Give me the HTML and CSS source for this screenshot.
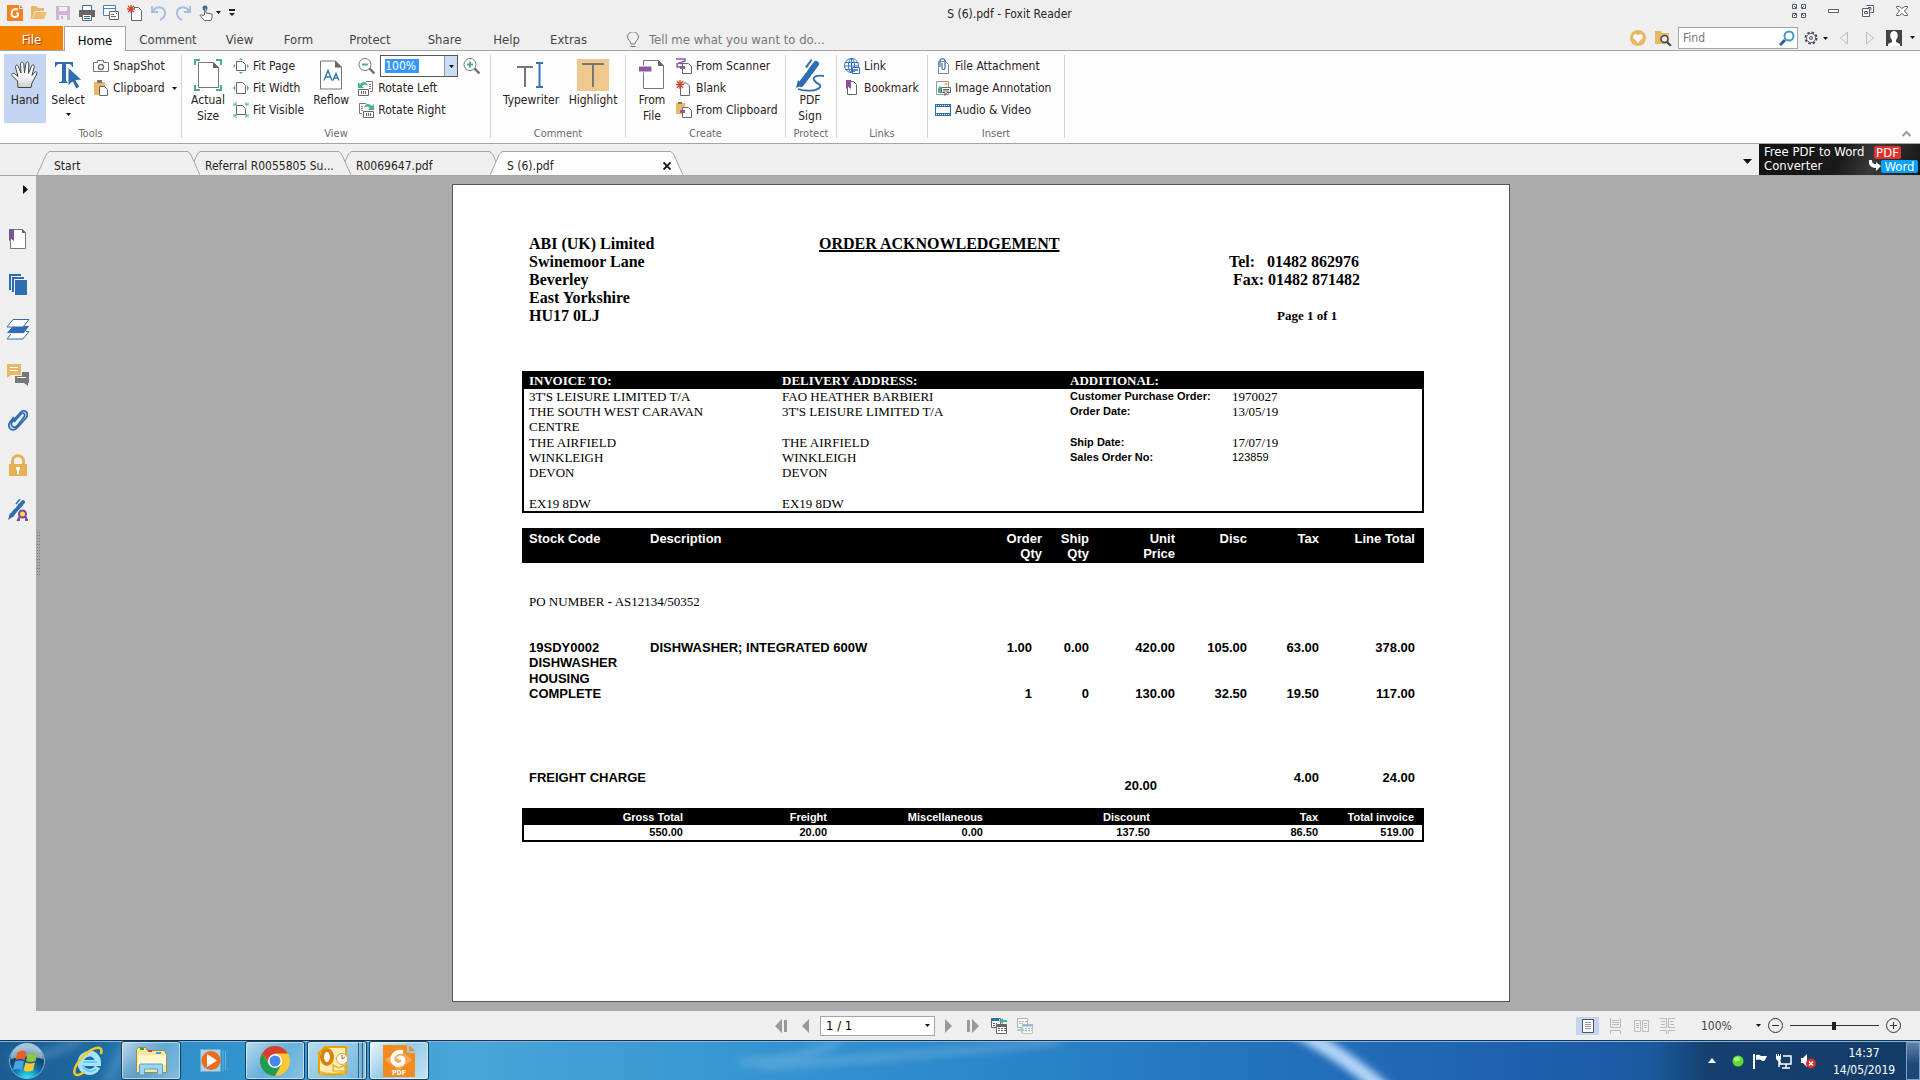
FILE: index.html
```html
<!DOCTYPE html>
<html lang="en">
<head>
<meta charset="utf-8">
<title>S (6).pdf - Foxit Reader</title>
<link rel="stylesheet" href="styles.css">
</head>
<body>
<header class="titlebar">
  <div class="quick">
    <svg width="16" height="16" viewBox="0 0 16 16"><path fill="#f58220" d="M0 0h12v4h4v12H0z"/><path fill="#f58220" d="M13 0l3 3h-3z"/><path fill="none" stroke="#fff" stroke-width="2" d="M11 4.500C7 3 4 6 4.500 9s4 4 6 2c1-1 1-3-1-3"/></svg>
    <button aria-label="Open"><svg width="16" height="16" viewBox="0 0 16 16"><path fill="#e9b765" d="M0 1h5l2 2h6v3H4L1 14H0z"/><path fill="#edbd6c" d="M4.500 7H16l-3 7H1.500z"/></svg></button>
    <button aria-label="Save"><svg width="16" height="16" viewBox="0 0 16 16"><path fill="#cdb5d8" d="M1 1h14v14H1z"/><path fill="#efefef" d="M4 2h8v4H4zM4 10h8v5H4z"/><path fill="#cdb5d8" d="M6 11h2v3H6z"/></svg></button>
    <button aria-label="Print"><svg width="16" height="16" viewBox="0 0 16 16"><path fill="#fff" stroke="#2d6db0" d="M3.500.5h9v5h-9z"/><path fill="#666" d="M0 5h16v7h-3v-2H3v2H0z"/><path fill="#fff" stroke="#666" d="M3.500 9.500h9v6h-9z"/><path stroke="#2d6db0" d="M5 11.500h6M5 13.500h6"/></svg></button>
    <button aria-label="Email"><svg width="16" height="16" viewBox="0 0 16 16"><path fill="#fff" stroke="#4581bd" d="M.5.5h12v10H.5zM.5 3.500h12"/><path fill="#fff" stroke="#666" d="M6.500 6.500h9v8h-9z"/><path stroke="#666" d="M8 9.500h3M8 11.500h5M13 8.500h1"/></svg></button>
    <button aria-label="New"><svg width="16" height="16" viewBox="0 0 16 16"><path fill="#fff" stroke="#666" d="M4.500 4v11.500h10V5.500l-3-3H7"/><path stroke="#d04a32" stroke-width="1.300" d="M4 0v8M0 4h8M1 1l6 6M7 1L1 7"/></svg></button>
    <button aria-label="Undo"><svg width="16" height="16" viewBox="0 0 16 16"><path fill="none" stroke="#a5bfdc" stroke-width="2" d="M2 6c4-6 12-4 12 2 0 4-3 6-5 7M1 1v6h6"/></svg></button>
    <button aria-label="Redo"><svg width="16" height="16" viewBox="0 0 16 16"><path fill="none" stroke="#a5bfdc" stroke-width="2" d="M14 6C10 0 2 2 2 8c0 4 3 6 5 7M15 1v6H9"/></svg></button>
    <button aria-label="Touch mode"><svg width="22" height="16" viewBox="0 0 22 16"><circle cx="6" cy="3" r="2.500" fill="#2d6db0"/><path fill="#fff" stroke="#666" d="M5.500 10V3.500q.8-1 1.500 0V8l6 1v4l-1 2.500H5.500L1 10.500q1-1.500 3 0z"/><path fill="#111" d="M17 6h5l-2.500 3z"/></svg></button>
    <button aria-label="Customise"><svg width="6" height="8" viewBox="0 0 6 8"><path fill="#222" d="M0 0h6v2H0zM0 4h6L3 7z"/></svg></button>
  </div>
  <h1 class="wintitle">S (6).pdf - Foxit Reader</h1>
  <div class="winctl">
    <button aria-label="Full screen"><svg width="14" height="14" viewBox="0 0 14 14"><path fill="none" stroke="#555a6e" d="M.5.5h4v4h-4zM9.500.5h4v4h-4zM.5 9.500h4v4h-4zM9.500 9.500h4v4h-4zM2 2l2 2M12 2l-2 2M2 12l2-2M12 12l-2-2"/></svg></button>
    <button aria-label="Minimise"><svg width="12" height="14" viewBox="0 0 12 14"><path fill="#fff" stroke="#555a6e" d="M.5 5.500h10v3H.5z"/></svg></button>
    <button aria-label="Restore"><svg width="12" height="12" viewBox="0 0 12 12"><path fill="#fff" stroke="#555a6e" d="M4.500.5h7v7h-3M.5 3.500h7v8h-7zM2.500 6.500h3v2h-3zM6 2.500h3v3"/></svg></button>
    <button aria-label="Close"><svg width="12" height="12" viewBox="0 0 12 12"><path fill="#fff" stroke="#555a6e" d="M.5 1.500h3l2.500 2 2.500-2h3v1l-3 3.500 3 3.500v1h-3l-2.500-2-2.500 2h-3v-1l3-3.500-3-3.500z"/></svg></button>
  </div>
</header>

<nav class="menubar">
  <button class="m-file">File</button>
  <button class="m-home">Home</button>
  <button class="m m-lg">Comment</button>
  <button class="m m-sm">View</button>
  <button class="m m-sm">Form</button>
  <button class="m m-lg">Protect</button>
  <button class="m m-md">Share</button>
  <button class="m m-sm">Help</button>
  <button class="m m-md">Extras</button>
  <label class="tell"><svg width="12" height="16" viewBox="0 0 12 16"><path fill="none" stroke="#777" d="M4 12c0-3-3.500-4-3.500-7a5.200 5 0 0 1 11 0c0 3-3.500 4-3.500 7zM3.500 14.500h5"/></svg><input type="text" placeholder="Tell me what you want to do..."></label>
  <div class="menuright">
    <svg class="heart" width="16" height="16" viewBox="0 0 16 16"><circle cx="8" cy="8" r="8" fill="#e9b765"/><path fill="#fff" d="M8 13L3.500 8C2 5 6 2.500 8 5.500 10 2.500 14 5 12.500 8z"/></svg>
    <svg width="17" height="16" viewBox="0 0 17 16"><path fill="#e9b765" d="M0 1h6l1 2h7v11H0z"/><circle cx="9.500" cy="9" r="3.500" fill="#e8e8e8" stroke="#444" stroke-width="1.500"/><path stroke="#444" stroke-width="2" d="M12 12l4 4"/></svg>
    <label class="find"><input type="search" placeholder="Find" aria-label="Find"><svg width="16" height="16" viewBox="0 0 16 16"><path stroke="#2f6097" stroke-width="3" d="M1 15l5-5"/><circle cx="10" cy="6" r="4.500" fill="#fff" stroke="#3c9ccb" stroke-width="2"/></svg></label>
    <button aria-label="Settings"><svg width="24" height="14" viewBox="0 0 24 14"><circle cx="7" cy="7" r="5.500" fill="none" stroke="#444a5a" stroke-width="2" stroke-dasharray="2.500 1.800"/><circle cx="7" cy="7" r="4.500" fill="#f4f4f4" stroke="#667"/><circle cx="7" cy="7" r="1.500" fill="none" stroke="#444a5a"/><path fill="#111" d="M19 6h5l-2.500 3z"/></svg></button>
    <button class="hist" aria-label="Previous"><svg width="8" height="14" viewBox="0 0 8 14"><path fill="none" stroke="#bbb" d="M7.500 1v12L.5 7z"/></svg></button>
    <button class="hist" aria-label="Next"><svg width="8" height="14" viewBox="0 0 8 14"><path fill="none" stroke="#bbb" d="M.5 1v12l7-6z"/></svg></button>
    <button aria-label="Account"><svg width="30" height="16" viewBox="0 0 30 16"><path fill="#444" d="M0 0h16v16H0z"/><path fill="#fff" d="M2 16v-2l4-2v-2C3 7 4 1 8 1s5 6 2 9v2l4 2v2z"/><path fill="#111" d="M24 6h5l-2.500 3z"/></svg></button>
  </div>
</nav>

<section class="ribbon">
  <div class="group g-tools">
    <div class="gbody">
      <button class="big hand on"><svg width="28" height="28" viewBox="0 0 28 28"><defs><linearGradient id="hg" x1="0" y1="0" x2="0" y2="1"><stop offset=".5" stop-color="#fff"/><stop offset="1" stop-color="#ccc"/></linearGradient></defs><path fill="url(#hg)" stroke="#444" d="M7 26.500L6.500 20 1 14.500c-1-2 1.500-3 3-1.500l3 2.500L4.500 6c0-2.500 2.500-2.500 3 0L10 12 9.500 3c0-2.500 3-2.500 3.300 0l.7 9 1.300-9.500c.5-2.300 3-2 3 .3L17.500 12.500 20.500 5c1-2 3.200-1 2.700 1L21 14.500l2.500-3c1.500-1.500 3-.5 2.300 1.500L21 22l-1 4.500z"/></svg><span>Hand</span></button>
      <button class="big select"><svg width="28" height="28" viewBox="0 0 28 28"><path fill="#2d6db0" d="M1 1h18v5h-1q-.5-3-3-3h-3v16q0 2 3 2v1H5v-1q3 0 3-2V3H5Q2.500 3 2 6H1z"/><path fill="#2d6db0" stroke="#fff" d="M14 6l14 13-6 .5 4 6.500-4 2-3.500-7L14 25z"/></svg><span>Select</span><svg class="dd" width="5" height="3" viewBox="0 0 5 3"><path fill="#111" d="M0 0h5L2.500 3z"/></svg></button>
      <div class="rows">
        <button class="row"><svg width="16" height="16" viewBox="0 0 16 16"><path fill="none" stroke="#777" d="M.5 4.500h4v-2h6v2h5v9H.5z"/><circle cx="8" cy="9" r="2.500" fill="none" stroke="#777" stroke-width="1.500"/></svg>SnapShot</button>
        <button class="row"><svg width="16" height="16" viewBox="0 0 16 16"><path fill="#e9b765" d="M1 2h11v13H1z"/><path fill="#777" d="M4 0h5v3H4z"/><path fill="#fff" stroke="#666" d="M6.500 6.500h5l3 3v6h-8z"/></svg>Clipboard<svg class="more" width="5" height="3" viewBox="0 0 5 3"><path fill="#111" d="M0 0h5L2.500 3z"/></svg></button>
      </div>
    </div>
    <div class="glabel">Tools</div>
  </div>
  <div class="group g-view">
    <div class="gbody">
      <button class="big actual"><svg width="28" height="32" viewBox="0 0 28 32"><path fill="none" stroke="#4caf8e" stroke-width="2" d="M1 6V1h5M22 1h5v5M1 26v5h5M22 31h5v-5"/><path fill="#fff" stroke="#777" d="M4.500 3.500h15l5 5v20h-20z"/><path fill="#666" d="M19 3l6 6h-6z"/></svg><span>Actual<br>Size</span></button>
      <div class="rows">
        <button class="row"><svg width="16" height="16" viewBox="0 0 16 16"><path fill="#fff" stroke="#666" d="M3.500 3.500h6l3 3v6h-9z"/><path fill="#4caf8e" d="M6 2l2-2 2 2zM6 14l2 2 2-2zM2 6L0 8l2 2zM14 6l2 2-2 2z"/></svg>Fit Page</button>
        <button class="row"><svg width="16" height="16" viewBox="0 0 16 16"><path fill="#fff" stroke="#666" d="M3.500 2.500h6l3 3v8h-9z"/><path fill="#4caf8e" d="M2 5L0 8l2 3zM14 5l2 3-2 3z"/></svg>Fit Width</button>
        <button class="row"><svg width="16" height="16" viewBox="0 0 16 16"><path fill="#fff" stroke="#666" d="M3.500 3.500h6l3 3v6h-9z"/><path fill="none" stroke="#4caf8e" d="M0 .5l3 3M3 0v3H0M16 .5l-3 3M13 0v3h3M0 15.500l3-3M3 16v-3H0M16 15.500l-3-3M13 16v-3h3"/></svg>Fit Visible</button>
      </div>
      <button class="big reflow"><svg width="22" height="29" viewBox="0 0 22 29"><path fill="#fff" stroke="#777" d="M.5.5h15l6 6v22H.5z"/><path fill="#666" d="M15 0l7 7h-7z"/><path fill="none" stroke="#3574b5" stroke-width="1.400" d="M4 20l4-10 4 10M5.500 16.500h5M13 20l3-7 3 7M14 17.500h4"/></svg><span>Reflow</span></button>
      <div class="rows">
        <div class="row zoomrow">
          <button aria-label="Zoom out"><svg width="17" height="16" viewBox="0 0 17 16"><circle cx="7" cy="6.500" r="6" fill="#fff" stroke="#777"/><path stroke="#4caf8e" stroke-width="2" d="M4 6.500h6"/><path stroke="#777" stroke-width="2.500" d="M11.500 10.500l5 5"/></svg></button>
          <span class="combo"><input type="text" value="100%" aria-label="Zoom"><button aria-label="Zoom levels"><svg width="5" height="3" viewBox="0 0 5 3"><path fill="#111" d="M0 0h5L2.500 3z"/></svg></button></span>
          <button aria-label="Zoom in"><svg width="17" height="16" viewBox="0 0 17 16"><circle cx="7" cy="6.500" r="6" fill="#fff" stroke="#777"/><path stroke="#4caf8e" stroke-width="2" d="M4 6.500h6M7 3.500v6"/><path stroke="#777" stroke-width="2.500" d="M11.500 10.500l5 5"/></svg></button>
        </div>
        <button class="row"><svg width="16" height="16" viewBox="0 0 16 16"><path fill="#fff" stroke="#777" d="M8 1.500h6.500v10H12"/><path stroke="#777" d="M11 4.500h2M11 6.500h2M11 8.500h2"/><path fill="#fff" stroke="#666" d="M.5 9.500h10v6H.5z"/><path stroke="#666" d="M3.500 11v3M5.500 11v3M7.500 11v3"/><path fill="#4caf8e" d="M0 2l2 2c3-3 7-3 8 2-2-2-4-2-6 0l2 2H0z"/></svg>Rotate Left</button>
        <button class="row"><svg width="16" height="16" viewBox="0 0 16 16"><path fill="#fff" stroke="#777" d="M8 1.500H1.500v10H4"/><path stroke="#777" d="M3 4.500h2M3 6.500h2M3 8.500h2"/><path fill="#fff" stroke="#666" d="M5.500 9.500h10v6h-10z"/><path stroke="#666" d="M8.500 11v3M10.500 11v3M12.500 11v3"/><path fill="#4caf8e" d="M16 2l-2 2C11 1 7 1 6 6c2-2 4-2 6 0l-2 2h6z"/></svg>Rotate Right</button>
      </div>
    </div>
    <div class="glabel">View</div>
  </div>
  <div class="group g-comment">
    <div class="gbody">
      <button class="big typew"><svg width="28" height="28" viewBox="0 0 28 28"><path fill="none" stroke="#777" stroke-width="2" d="M0 6h16M8 6v20"/><path fill="none" stroke="#3574b5" stroke-width="2" d="M19 2h3.500v24H19M26 2h-3.500M26 26h-3.500"/></svg><span>Typewriter</span></button>
      <button class="big high"><svg width="32" height="32" viewBox="0 0 32 32"><path fill="#efc88d" d="M0 0h32v32H0z"/><path stroke="#777" stroke-width="2" d="M5 5h22M16 5v23"/></svg><span>Highlight</span></button>
    </div>
    <div class="glabel">Comment</div>
  </div>
  <div class="group g-create">
    <div class="gbody">
      <button class="big fromfile"><svg width="26" height="30" viewBox="0 0 26 30"><path fill="#fff" stroke="#777" d="M4.500.5h15l5 5v23h-20z"/><path fill="#666" d="M19 0l6 6h-6z"/><path fill="#8c5ba6" stroke="#fff" d="M-1 6h14v6H-1z"/></svg><span>From<br>File</span></button>
      <div class="rows">
        <button class="row"><svg width="16" height="16" viewBox="0 0 16 16"><path fill="none" stroke="#8c5ba6" stroke-width="1.500" d="M0 1h9v2L1 6v3h4M2 5l7 1"/><path fill="#fff" stroke="#666" d="M6.500 5.500h6l3 3v7h-9z"/><path fill="#8c5ba6" d="M4 8h5v3H4z"/></svg>From Scanner</button>
        <button class="row"><svg width="16" height="16" viewBox="0 0 16 16"><path fill="#fff" stroke="#666" d="M4.500 5v10.500h9V6l-3-3H7"/><path stroke="#d04a32" stroke-width="1.300" d="M4 0v9M0 4.500h8M1 1l6 7M7 1L1 8"/></svg>Blank</button>
        <button class="row"><svg width="16" height="16" viewBox="0 0 16 16"><path fill="#e9b765" d="M0 1h9v11H0z"/><path fill="#777" d="M2 0h4v2H2z"/><path fill="#fff" stroke="#666" d="M6.500 5.500h6l3 3v7h-9z"/><path fill="#8c5ba6" d="M4 8h5v3H4z"/></svg>From Clipboard</button>
      </div>
    </div>
    <div class="glabel">Create</div>
  </div>
  <div class="group g-protect">
    <div class="gbody">
      <button class="big"><svg width="30" height="34" viewBox="0 0 30 34"><path fill="none" stroke="#2d6db0" stroke-width="6" stroke-linecap="round" d="M21 6l-6 8M13 17l-7 9"/><path fill="#2d6db0" d="M3 22l5 5-7 3zM10 9l6-8 1.500 1L12 10z"/><path fill="none" stroke="#2d6db0" stroke-width="1.800" d="M29 18c-5-1-12 0-10 4s8 4 6 7c-3 5-17 4-22 2"/></svg><span>PDF<br>Sign</span></button>
    </div>
    <div class="glabel">Protect</div>
  </div>
  <div class="group g-links">
    <div class="gbody">
      <div class="rows">
        <button class="row"><svg width="16" height="16" viewBox="0 0 16 16"><circle cx="7.500" cy="7.500" r="7" fill="none" stroke="#3574b5"/><ellipse cx="7.500" cy="7.500" rx="3" ry="7" fill="none" stroke="#3574b5"/><path stroke="#3574b5" d="M1 4.500h13M0 8h15M7.500 0v15M1 11.500h8"/><path fill="#fff" stroke="#2d6db0" d="M8.500 9.500h7v6h-7z"/><path fill="none" stroke="#2d6db0" stroke-width="1.500" d="M10 14v-2h4"/></svg>Link</button>
        <button class="row"><svg width="16" height="16" viewBox="0 0 16 16"><path fill="#fff" stroke="#666" d="M3.500 1.500h6l3 3v10h-9z"/><path fill="#8c4f9e" d="M2 0h5v9L4.500 7 2 9z"/></svg>Bookmark</button>
      </div>
    </div>
    <div class="glabel">Links</div>
  </div>
  <div class="group g-insert">
    <div class="gbody">
      <div class="rows">
        <button class="row"><svg width="16" height="16" viewBox="0 0 16 16"><path fill="#fff" stroke="#888" d="M3.500 3.500h7l3 3v9h-10z"/><path fill="none" stroke="#2d6db0" stroke-width="1.200" d="M5 9V3c0-3 5-3 5 0v7c0 2-3 2-3 0V5"/></svg>File Attachment</button>
        <button class="row"><svg width="16" height="16" viewBox="0 0 16 16"><path fill="#fff" stroke="#999" d="M1.500 1.500h12v13h-12z"/><path fill="#4caf8e" d="M3 13V8l2-2 3 4v3z"/><circle cx="11" cy="4" r="1.500" fill="#e9b765"/><path fill="#fff" stroke="#666" d="M6.500 7.500h9v5H12l-2 3v-3H6.500z"/><path stroke="#666" d="M8 9.500h6M8 11h6"/></svg>Image Annotation</button>
        <button class="row"><svg width="16" height="16" viewBox="0 0 16 16"><path fill="#2d6db0" d="M0 2h16v12H0z"/><path fill="#fff" d="M1 5h14v6H1z"/><path stroke="#fff" stroke-dasharray="1 1" d="M1 3.500h14M1 12.500h14"/></svg>Audio &amp; Video</button>
      </div>
    </div>
    <div class="glabel">Insert</div>
  </div>
  <button class="collapse" aria-label="Collapse ribbon"><svg width="9" height="7" viewBox="0 0 9 7"><path fill="none" stroke="#999" stroke-width="2" d="M.5 6l4-4 4 4"/></svg></button>
</section>

<div class="tabstrip">
  <div class="tab t1"><svg width="13" height="24" viewBox="0 0 13 24"><path class="edge" d="M0 24L9 4Q11 .5 13 .5V24"/></svg><button class="mid">Start</button><svg width="13" height="24" viewBox="0 0 13 24"><path class="edge" d="M13 24L4 4Q2 .5 0 .5V24"/></svg></div>
  <div class="tab t2"><svg width="13" height="24" viewBox="0 0 13 24"><path class="edge" d="M0 24L9 4Q11 .5 13 .5V24"/></svg><button class="mid">Referral R0055805 Su...</button><svg width="13" height="24" viewBox="0 0 13 24"><path class="edge" d="M13 24L4 4Q2 .5 0 .5V24"/></svg></div>
  <div class="tab t3"><svg width="13" height="24" viewBox="0 0 13 24"><path class="edge" d="M0 24L9 4Q11 .5 13 .5V24"/></svg><button class="mid">R0069647.pdf</button><svg width="13" height="24" viewBox="0 0 13 24"><path class="edge" d="M13 24L4 4Q2 .5 0 .5V24"/></svg></div>
  <div class="tab active"><svg width="13" height="24" viewBox="0 0 13 24"><path class="edge" d="M0 24L9 4Q11 .5 13 .5V24"/></svg><div class="mid"><button>S (6).pdf</button><button aria-label="Close tab"><svg width="8" height="8" viewBox="0 0 8 8"><path stroke="#111" stroke-width="1.800" d="M.5.5l7 7M7.500.5l-7 7"/></svg></button></div><svg width="13" height="24" viewBox="0 0 13 24"><path class="edge" d="M13 24L4 4Q2 .5 0 .5V24"/></svg></div>
  <button class="tabmenu" aria-label="Tab list"><svg width="9" height="5" viewBox="0 0 9 5"><path fill="#111" d="M0 0h9L4.500 5z"/></svg></button>
  <a class="promo" href="#"><span>Free PDF to Word<br>Converter</span><span class="badges"><b class="pdf">PDF</b><b class="word"><svg width="12" height="11" viewBox="0 0 12 11"><path fill="#fff" d="M0 0h3c0 3 1 4 4 4V2l5 4-5 5V8C2 8-1 5 0 0z"/></svg><i>Word</i></b></span></a>
</div>

<main class="work">
  <aside class="side">
    <button class="expand" aria-label="Expand"><svg width="5" height="9" viewBox="0 0 5 9"><path fill="#111" d="M0 0l5 4.500L0 9z"/></svg></button>
    <button aria-label="Bookmarks"><svg width="18" height="21" viewBox="0 0 18 21"><path fill="#fff" stroke="#777" d="M1.500.5h12l3 3v16h-15z"/><path fill="#666" d="M13 0l4 4h-4z"/><path fill="#7a5594" d="M0 0h5v12l-2.500-2L0 12z"/></svg></button>
    <button aria-label="Pages"><svg width="18" height="21" viewBox="0 0 18 21"><path fill="none" stroke="#2d6db0" stroke-width="2" d="M1 16V1h11M4 18V4h11"/><path fill="#2d6db0" d="M6 6h12v15H6z"/></svg></button>
    <button aria-label="Layers"><svg width="24" height="21" viewBox="0 0 24 21"><path fill="#fff" stroke="#2d6db0" d="M7 12.500h16L17 20H1z"/><path fill="#2d6db0" stroke="#efefef" d="M7 6.500h17l-6 8H0z"/><path fill="#fff" stroke="#2d6db0" d="M7 .5h16L17 8H1z"/></svg></button>
    <button aria-label="Comments"><svg width="22" height="22" viewBox="0 0 22 22"><path fill="#777" d="M8 8h14v11h-1v3l-4-3H8z"/><path fill="#e9b765" stroke="#efefef" d="M-.5-.5h15v12H4L-.5 15z"/><path stroke="#fff" d="M3 3.500h8M3 6.500h8M10 13.500h9"/></svg></button>
    <button aria-label="Attachments"><svg width="20" height="22" viewBox="0 0 20 22"><path fill="none" stroke="#2d6db0" stroke-width="1.800" d="M6 13l7-8c2-2 5 0 3 3L9 17c-3 3-7 0-5-4l8-9c4-5 10 0 6 5l-8 9c-5 6-12 1-8-5l4-5"/></svg></button>
    <button aria-label="Security"><svg width="18" height="22" viewBox="0 0 18 22"><path fill="none" stroke="#e8af55" stroke-width="3" d="M3.500 11V7c0-7 11-7 11 0v4"/><path fill="#e8af55" d="M0 10h18v12H0z"/><path fill="#fff" d="M7 13h4v2.500h-1V20H8v-4.500H7z"/></svg></button>
    <button aria-label="Signatures"><svg width="20" height="22" viewBox="0 0 20 22"><path stroke="#2d6db0" stroke-width="4" stroke-linecap="round" d="M15 3l-5 6M8 11l-4 5"/><path stroke="#2d6db0" stroke-width="1.500" d="M8 5l4-5"/><path fill="#2d6db0" d="M2 14l4 3-6 4z"/><path fill="none" stroke="#7b4a9d" stroke-width="2" d="M12 17l-2 4 2 0M17 17l2 4-2 0"/><circle cx="14.500" cy="15" r="3.500" fill="#ffd54a" stroke="#7b4a9d" stroke-width="2"/></svg></button>
  </aside>
  <div class="splitter"><svg width="4" height="44" viewBox="0 0 4 44"><path stroke="#777" stroke-dasharray="1 2" d="M.5 0v44M2.500 0v44"/></svg></div>
  <div class="canvas">
    <article class="paper">
      <div class="head">
        <address>ABI (UK) Limited<br>Swinemoor Lane<br>Beverley<br>East Yorkshire<br>HU17 0LJ</address>
        <h2>ORDER ACKNOWLEDGEMENT</h2>
        <div class="phones"><p>Tel:&nbsp;&nbsp; 01482 862976</p><p>&nbsp;Fax: 01482 871482</p><p class="pageno">Page 1 of 1</p></div>
      </div>
      <div class="parties">
        <div class="ph">INVOICE TO:</div><div class="ph">DELIVERY ADDRESS:</div><div class="ph">ADDITIONAL:</div><div class="ph"></div>
        <div>3T'S LEISURE LIMITED T/A</div><div>FAO HEATHER BARBIERI</div><div class="nb">Customer Purchase Order:</div><div>1970027</div>
        <div>THE SOUTH WEST CARAVAN</div><div>3T'S LEISURE LIMITED T/A</div><div class="nb">Order Date:</div><div>13/05/19</div>
        <div>CENTRE</div><div></div><div></div><div></div>
        <div>THE AIRFIELD</div><div>THE AIRFIELD</div><div class="nb">Ship Date:</div><div>17/07/19</div>
        <div>WINKLEIGH</div><div>WINKLEIGH</div><div class="nb">Sales Order No:</div><div class="nn">123859</div>
        <div>DEVON</div><div>DEVON</div><div></div><div></div>
        <div></div><div></div><div></div><div></div>
        <div>EX19 8DW</div><div>EX19 8DW</div><div></div><div></div>
      </div>
      <table class="lines">
        <colgroup><col class="c-code"><col><col class="c-oq"><col class="c-sq"><col class="c-unit"><col class="c-disc"><col class="c-disc"><col class="c-total"></colgroup>
        <thead><tr><th>Stock Code</th><th>Description</th><th>Order<br>Qty</th><th>Ship<br>Qty</th><th>Unit<br>Price</th><th>Disc</th><th>Tax</th><th>Line Total</th></tr></thead>
        <tbody>
          <tr class="gap"><td class="po" colspan="8">PO NUMBER <b>-</b> AS12134/50352</td></tr>
          <tr class="gap"><td>19SDY0002</td><td>DISHWASHER; INTEGRATED 600W</td><td>1.00</td><td>0.00</td><td>420.00</td><td>105.00</td><td>63.00</td><td>378.00</td></tr>
          <tr><td>DISHWASHER</td><td></td><td></td><td></td><td></td><td></td><td></td><td></td></tr>
          <tr class="tall"><td>HOUSING</td><td></td><td></td><td></td><td></td><td></td><td></td><td></td></tr>
          <tr><td>COMPLETE</td><td></td><td>1</td><td>0</td><td>130.00</td><td>32.50</td><td>19.50</td><td>117.00</td></tr>
          <tr class="freight"><td colspan="2">FREIGHT CHARGE</td><td></td><td></td><td class="charge">20.00</td><td></td><td>4.00</td><td>24.00</td></tr>
        </tbody>
      </table>
      <table class="totals">
        <colgroup><col class="k1"><col class="k2"><col class="k3"><col><col class="k5"><col class="k6"></colgroup>
        <thead><tr><th>Gross Total</th><th>Freight</th><th>Miscellaneous</th><th>Discount</th><th>Tax</th><th>Total invoice</th></tr></thead>
        <tbody><tr><td>550.00</td><td>20.00</td><td>0.00</td><td>137.50</td><td>86.50</td><td>519.00</td></tr></tbody>
      </table>
    </article>
  </div>
</main>

<footer class="status">
  <div class="pager">
    <button aria-label="First page"><svg width="12" height="14" viewBox="0 0 12 14"><path fill="#999" d="M7 0v14L0 7zM9 1h3v12H9z"/></svg></button>
    <button aria-label="Previous page"><svg width="7" height="14" viewBox="0 0 7 14"><path fill="#999" d="M7 0v14L0 7z"/></svg></button>
    <span class="pagebox"><input type="text" value="1 / 1" aria-label="Page"><button aria-label="Page list"><svg width="5" height="3" viewBox="0 0 5 3"><path fill="#111" d="M0 0h5L2.500 3z"/></svg></button></span>
    <button aria-label="Next page"><svg width="7" height="14" viewBox="0 0 7 14"><path fill="#999" d="M0 0v14l7-7z"/></svg></button>
    <button aria-label="Last page"><svg width="12" height="14" viewBox="0 0 12 14"><path fill="#999" d="M5 0v14l7-7zM0 1h3v12H0z"/></svg></button>
    <button class="view" aria-label="Previous view"><svg width="16" height="16" viewBox="0 0 16 16"><path fill="#fff" stroke="#666" d="M.5.5h9v9h-9z"/><path fill="#2d6db0" d="M0 0h8v3H0z"/><path stroke="#666" stroke-dasharray="2 1" d="M2 5.500h4M2 7.500h3"/><path fill="#4caf8e" d="M8 3l4-3v2h4v2h-4v2z"/><path fill="#fff" stroke="#666" d="M5.500 6.500h10v9h-10z"/><path stroke="#666" stroke-width="2" d="M6 8h9"/><path stroke="#666" stroke-dasharray="2 1" d="M7 10.500h8M7 12.500h8"/></svg></button>
    <button aria-label="Next view"><svg width="16" height="16" viewBox="0 0 16 16" opacity=".45"><path fill="#fff" stroke="#666" d="M.5.5h10v9h-10z"/><path stroke="#666" stroke-dasharray="2 1" d="M2 3.500h8M2 5.500h4"/><path fill="#fff" stroke="#888" d="M5.500 6.500h10v9h-10z"/><path stroke="#2d6db0" stroke-width="2" d="M5 7.500h11"/><path stroke="#666" stroke-dasharray="2 1" d="M8 10.500h7M8 12.500h7"/><path fill="#4caf8e" d="M8 12l-4-3v2H0v2h4v2z"/></svg></button>
  </div>
  <div class="zoomer">
    <button class="lay on" aria-label="Single page"><svg width="12" height="14" viewBox="0 0 12 14"><path fill="#fff" stroke="#555" d="M.5.5h11v13H.5z"/><path stroke="#999" d="M3 3.500h6M3 5.500h6M3 7.500h6M3 9.500h6"/></svg></button>
    <button class="lay" aria-label="Continuous"><svg width="11" height="16" viewBox="0 0 11 16"><path fill="none" stroke="#bbb" d="M.5 0v9.500h10V0M.5 16v-3.500h10V16M2 2.500h7M2 4.500h7M2 6.500h7"/></svg></button>
    <button class="lay" aria-label="Facing"><svg width="15" height="12" viewBox="0 0 15 12"><path fill="none" stroke="#bbb" d="M.5.5h6v11h-6zM8.500.5h6v11h-6zM2 3.500h3M2 5.500h3M2 7.500h3M10 3.500h3M10 5.500h3M10 7.500h3"/></svg></button>
    <button class="lay" aria-label="Continuous facing"><svg width="15" height="16" viewBox="0 0 15 16"><path fill="none" stroke="#bbb" d="M0 .5h6.500v9H0M15 .5H8.500v9H15M0 12.500h6.500V16M15 12.500H8.500V16M1 3.500h4M1 6.500h4M10 3.500h4M10 6.500h4"/></svg></button>
    <button class="pct">100%<svg width="5" height="3" viewBox="0 0 5 3"><path fill="#111" d="M0 0h5L2.500 3z"/></svg></button>
    <button aria-label="Zoom out"><svg width="15" height="15" viewBox="0 0 15 15"><circle cx="7.500" cy="7.500" r="7" fill="none" stroke="#333"/><path stroke="#333" d="M4 7.500h7"/></svg></button>
    <input class="range" type="range" min="0" max="100" value="49" aria-label="Zoom level">
    <button aria-label="Zoom in"><svg width="15" height="15" viewBox="0 0 15 15"><circle cx="7.500" cy="7.500" r="7" fill="none" stroke="#333"/><path stroke="#333" d="M4 7.500h7M7.500 4v7"/></svg></button>
  </div>
</footer>

<footer class="taskbar">
  <svg class="streak" viewBox="0 0 1920 40" preserveAspectRatio="none"><defs><filter id="bl" x="-20%" y="-50%" width="140%" height="200%"><feGaussianBlur stdDeviation="4"/></filter></defs><g filter="url(#bl)" fill="none"><path stroke="#b2d6f8" stroke-width="15" d="M1292-14C1330 8 1350 20 1386 52"/><path stroke="#fff" stroke-opacity=".14" stroke-width="10" d="M740 22Q800 20 840 0M760 26Q950 12 1060 0M10 20Q50 16 80 0M105 44L130 0"/></g></svg>
  <button class="orb" aria-label="Start"><svg width="38" height="38" viewBox="0 0 38 38"><defs><radialGradient id="og" cx=".5" cy="1" r=".9"><stop offset="0" stop-color="#2ff0ff"/><stop offset=".45" stop-color="#0d6fa8"/><stop offset=".75" stop-color="#123f66"/><stop offset="1" stop-color="#8fb6ce"/></radialGradient></defs><circle cx="19" cy="19" r="17.500" fill="url(#og)" stroke="#7fb0d0"/><path fill="#b4cfdf" opacity=".65" d="M3 17a16 16 0 0 1 32 0Q19 12 3 17z"/><path fill="#e8602c" d="M9.500 10q5-3 9 0l-2 8q-4-2-9 0z"/><path fill="#8fc73e" d="M20 11q5 2.500 9.500 0l-2 8q-5 2-9.500 0z"/><path fill="#45a5e5" d="M7 19.500q5-2 9 0L14 28q-4-2-9 0z"/><path fill="#fdc72e" d="M17.500 20.500q5 2 9.500 0l-2 8q-5 2-9.500 0z"/></svg></button>
  <button class="tb plain ie" aria-label="Internet Explorer"><svg width="32" height="32" viewBox="0 0 32 32"><path fill="none" stroke="#a5e4fa" stroke-width="6" d="M8 18h17C25 5 8 6 7.500 18c0 10 13 12 17 4"/><path fill="none" stroke="#6ccbf2" stroke-width="2" d="M10 17h14M10 20c1 6 9 8 13 4"/><path fill="none" stroke="#f7cb1d" stroke-width="2.500" d="M28 9c2-7-3-8-10-4C8 11-1 24 2 29c1 2 5 1 9-2"/></svg></button>
  <button class="tb run" aria-label="Explorer"><svg width="34" height="30" viewBox="0 0 34 30"><path fill="#f5e7a1" stroke="#a58d36" d="M2.500 3.500l2-2h7l2 3h17l2 4v18h-30z"/><path fill="#fff6c9" d="M4 9h28v10H4z"/><path fill="#1ca838" d="M6 2h4v2H6z"/><path fill="#d8402a" d="M14 4h4v2h-4z"/><path fill="#35a4e4" d="M22 6h5v2h-5z"/><path fill="#9cd5ef" stroke="#579fc8" d="M5.500 29V19q0-1 1-1h21q1 0 1 1v10h-5v-6h-13v6z"/></svg></button>
  <button class="tb plain" aria-label="Media Player"><svg width="30" height="26" viewBox="0 0 30 26"><path fill="#a8d4ec" stroke="#6fafd2" d="M1.500 1.500h20v22h-20zM24 2v21M26.500 3v19"/><circle cx="12" cy="12.500" r="9.500" fill="#ee6c1c"/><path fill="#fff" d="M8 6l10 6.500L8 19z"/></svg></button>
  <button class="tb run" aria-label="Chrome"><svg width="30" height="30" viewBox="0 0 30 30"><circle cx="15" cy="15" r="15" fill="#fcc934"/><path fill="#d63f31" d="M2 7.500A15 15 0 0 1 28 7.500H15L10 18z"/><path fill="#1f9c52" d="M2 7.500A15 15 0 0 0 15 30l6-11-11 0z"/><circle cx="15" cy="15" r="7" fill="#fff"/><circle cx="15" cy="15" r="5.500" fill="#4a86ee"/></svg></button>
  <button class="tb run stack" aria-label="Outlook"><svg width="32" height="32" viewBox="0 0 32 32"><path fill="#fdeeb0" stroke="#e8a500" stroke-width="2" d="M8 2h21v26q-14 3-27 0V8z"/><path fill="#f7b61f" d="M3 26q13 4 25 0v3H3z"/><ellipse cx="10" cy="12" rx="5" ry="7" fill="#fff" stroke="#dd8208" stroke-width="4"/><circle cx="25" cy="14" r="5.500" fill="#fff" stroke="#e0a93b"/><path fill="none" stroke="#c5561c" d="M25 10v4l3-2"/><path fill="none" stroke="#eab53c" stroke-width="1.500" d="M16 20l6 3 6-3v6H16z"/></svg></button>
  <button class="tb run hot" aria-label="Foxit Reader"><svg width="32" height="32" viewBox="0 0 32 32"><path fill="#f58b1f" d="M0 0h24v8h8v24H0z"/><path fill="#f58b1f" d="M26 0l6 6h-6z"/><path fill="#f9a95a" d="M2 15L16 4l13 11-13 10z"/><path fill="none" stroke="#fff" stroke-width="4" d="M20 7C11 5 7 14 11 18c4 4 11 1 9-4-1-2-4-2-5 0"/><text x="16" y="30" fill="#fff" font-size="7" font-weight="bold" text-anchor="middle">PDF</text></svg></button>
  <div class="tray">
    <svg class="up" width="8" height="5" viewBox="0 0 8 5"><path fill="#fff" d="M0 5h8L4 0z"/></svg>
    <svg width="12" height="12" viewBox="0 0 12 12"><circle cx="6" cy="6" r="5.500" fill="#5fdc35"/><ellipse cx="5" cy="4" rx="3" ry="2" fill="#b4f590"/></svg>
    <svg width="16" height="16" viewBox="0 0 16 16"><path fill="#fff" d="M1 1h2v15H1zM4 2q3-1 5 1l6 0-2 4q-2 2-4 0-2-1-5 0z"/></svg>
    <svg width="16" height="16" viewBox="0 0 16 16"><path fill="none" stroke="#fff" stroke-width="1.500" d="M7 3h8v8H4V8M10 11v4M6 15h8M3 8v6"/><path fill="#fff" d="M0 1h1v2h1V1h1v2h1V1h1v5L4 8H2L0 6z"/></svg>
    <svg width="16" height="16" viewBox="0 0 16 16"><path fill="#fff" d="M1 5h2l4-4v13L3 10H1z"/><circle cx="11" cy="10.500" r="5" fill="#dd2f26"/><path stroke="#fff" stroke-width="1.500" d="M9 8.500l4 4M13 8.500l-4 4"/></svg>
  </div>
  <div class="clock">14:37<br>14/05/2019</div>
  <button class="desk" aria-label="Show desktop"></button>
</footer>
</body>
</html>
```
FILE: styles.css
```css
* { box-sizing: border-box; }
html, body { margin: 0; height: 100%; }
body {
  display: flex;
  flex-direction: column;
  min-height: 100vh;
  background: #efefef;
  color: #2b2222;
  font: 12px/16px "DejaVu Sans Condensed", "Noto Sans", sans-serif;
  overflow: hidden;
}
button, input {
  font: inherit;
  color: inherit;
  border: 0;
  margin: 0;
  padding: 0;
  background: none;
  outline: 0;
  border-radius: 0;
}
button { display: inline-flex; align-items: center; justify-content: center; white-space: nowrap; }
svg { display: block; flex: none; }
h1, h2, p { margin: 0; font: inherit; }

/* title bar */
.titlebar { display: grid; grid-template-columns: 1fr auto 1fr; align-items: center; height: 26px; padding: 0 12px 0 7px; }
.quick { display: flex; align-items: center; gap: 8px; }
.wintitle { padding: 2px 0 0 104px; }
.winctl { display: flex; justify-content: flex-end; gap: 22px; padding-bottom: 5px; }

/* menu bar */
.menubar { display: flex; height: 25px; border-bottom: 1px solid #a5a5a5; font-size: 13px; }
.menubar > button { padding-top: 3px; }
.menubar > .m-file { width: 63px; background: #f28200; color: #fff; text-shadow: 1px 1px 1px #804000; }
.menubar > .m-home { width: 62px; height: 25px; margin-left: 1px; background: #fdfdfd; border: 1px solid #a5a5a5; border-bottom: 0; color: #000; }
.m { color: #444; }
.m-lg { width: 84px; }
.m-md { width: 65px; }
.m-sm { width: 59px; }
.tell { display: flex; align-items: center; gap: 10px; margin-left: 26px; padding-top: 3px; }
.tell input { width: 220px; }
::placeholder { color: #777; opacity: 1; }
.menuright { display: flex; align-items: center; gap: 6px; margin-left: auto; padding-right: 4px; }
.heart { margin-right: 3px; }
.find { display: flex; align-items: center; width: 120px; height: 22px; padding: 0 2px 0 4px; background: #fff; border: 1px solid #a5a5a5; font-size: 12px; }
.find input { width: 96px; }
.hist { width: 20px; }

/* ribbon */
.ribbon { display: flex; height: 93px; background: #fdfdfd; border-bottom: 1px solid #a5a5a5; }
.group { display: flex; flex-direction: column; padding-top: 3px; border-right: 1px solid #d5d5d5; border-image: linear-gradient(transparent 5%, #d5d5d5 5%, #d5d5d5 94%, transparent 94%) 1; }
.g-tools { width: 182px; }
.g-view { width: 309px; }
.g-comment { width: 135px; }
.g-create { width: 160px; }
.g-protect { width: 51px; }
.g-links { width: 91px; }
.g-insert { width: 137px; }
.gbody { display: flex; height: 70px; padding-left: 7px; }
.g-tools .gbody { padding-left: 4px; }
.g-protect .gbody { padding-left: 5px; }
.glabel { padding-top: 1px; color: #6b6b6b; font-size: 11px; line-height: 18px; text-align: center; }
.big { flex: none; flex-direction: column; justify-content: flex-start; padding-top: 4px; width: 38px; height: 69px; }
.big svg { height: 34px; }
.big span { line-height: 16px; }
.big .dd { height: 3px; margin-top: 5px; }
.big.hand { width: 42px; }
.on { background: #c3d5f2; }
.select { margin: 0 6px 0 3px; }
.rows { display: flex; flex-direction: column; padding-top: 1px; }
.row { display: flex; align-items: center; justify-content: flex-start; gap: 4px; height: 22px; }
.more { margin-left: 3px; }
.actual { margin-right: 6px; }
.reflow { margin: 0 8px; }
.zoomrow { gap: 5px; }
.combo { display: flex; align-items: center; justify-content: space-between; width: 78px; height: 22px; padding-left: 4px; background: #fff; border: 1px solid #555; }
.combo input { width: 34px; height: 14px; background: #3399ff; color: #fff; }
.combo button { width: 13px; height: 20px; background: #cbdcf6; border-left: 1px solid #999; }
.big.typew { width: 66px; }
.big.high { width: 58px; }
.fromfile { margin-right: 5px; }
.collapse { margin: auto 9px 6px auto; }

/* document tabs */
.tabstrip { display: flex; align-items: flex-end; height: 32px; padding-left: 37px; border-bottom: 1px solid #a5a5a5; }
.tab { position: relative; display: flex; width: 163px; height: 24px; margin-right: -12px; }
.tab .edge { fill: #efefef; stroke: #a5a5a5; }
.tab .mid { flex: 1; display: flex; align-items: center; justify-content: flex-start; padding: 4px 0 0 5px; background: #efefef; border-top: 1px solid #a5a5a5; margin: 0 -1px; min-width: 0; z-index: 1; }
.t1 { z-index: 3; }
.t2 { z-index: 2; }
.t3 { z-index: 1; }
.tab.active { width: 193px; z-index: 4; }
.tab.active .edge { fill: #fdfdfd; }
.tab.active .mid { background: #fdfdfd; justify-content: space-between; }
.tabmenu { margin: 0 7px 11px auto; }
.promo { display: flex; justify-content: space-between; align-self: stretch; width: 161px; padding: 1px 1px 0 5px; background: linear-gradient(110deg, #111, #1a1a1a 50%, #3a3a3a 70%, #151515); color: #fff; text-decoration: none; font-size: 13px; line-height: 14px; white-space: nowrap; }
.badges { display: flex; flex-direction: column; width: 50px; padding-top: 1px; margin-left: -14px; }
.badges b, .badges i { font-weight: 400; font-style: normal; line-height: 13px; border-radius: 2px; }
.pdf { width: 27px; margin-left: 5px; background: #e0322a; text-align: center; }
.word { display: flex; margin-top: 1px; }
.word i { width: 37px; background: #00a0ff; text-align: center; }

/* work area */
.work { display: flex; flex: 1; min-height: 0; background: #ababab; }
.side { display: flex; flex-direction: column; align-items: center; width: 36px; background: #efefef; }
.side button { width: 36px; height: 45px; }
.side .expand { height: 26px; justify-content: flex-end; padding-right: 8px; margin-bottom: 15px; }
.splitter { display: flex; align-items: center; justify-content: center; width: 6px; background: #a8aaac; padding-bottom: 80px; }
.canvas { display: flex; flex: 1; justify-content: center; padding: 8px 0 9px; overflow: hidden; }
.paper { width: 1058px; padding: 50px 85px 0 69px; background: #fff; border: 1px solid #555; color: #000; font: 13px/15px "Liberation Serif", serif; }
.head { display: grid; grid-template-columns: 290px 1fr 195px; height: 136px; padding-left: 7px; font-size: 16px; font-weight: 700; line-height: 18px; }
.head address { font-style: normal; }
.head h2 { text-decoration: underline; text-decoration-thickness: 2px; }
.phones { padding-top: 18px; }
.phones .pageno { padding: 18px 0 0 48px; font-size: 13px; }
.parties { display: grid; grid-template-columns: 258px 288px 162px 1fr; grid-template-rows: 18px; grid-auto-rows: 15px 15px 16px 15px; border: 2px solid #000; border-top: 0; }
.parties div { padding-left: 5px; white-space: nowrap; }
.parties div:nth-child(4n+2), .parties div:nth-child(4n+3), .parties div:nth-child(4n) { padding-left: 0; }
.parties .ph { background: #000; color: #fff; font-weight: 700; line-height: 19px; }
.nb, .nn { font-family: "Liberation Sans", sans-serif; font-size: 11px; }
.nb { font-weight: 700; }
.lines, .totals { width: 100%; table-layout: fixed; border-collapse: collapse; font-weight: 700; }
.lines { margin-top: 15px; font-family: "Liberation Sans", sans-serif; }
.lines th, .lines td { padding: 0; text-align: right; vertical-align: bottom; white-space: nowrap; }
.lines thead tr { height: 35px; background: #000; color: #fff; }
.lines th { padding-top: 3px; vertical-align: top; }
.lines th:nth-child(-n+2), .lines td:first-child, .lines td:nth-child(2):not(:empty) { text-align: left; }
.lines th:first-child, .lines td:first-child { padding-left: 7px; }
.lines th:last-child, .lines td:last-child { padding-right: 9px; }
.lines tr:not(.freight) td:nth-child(3) { padding-right: 10px; }
.lines td { height: 15px; }
.lines .gap td { height: 46px; }
.lines .tall td { height: 16px; }
.lines .freight td { height: 92px; padding-bottom: 8px; }
.lines .freight .charge { padding: 0 18px 0 0; }
.lines .freight td:nth-child(2) { text-align: right; }
.lines .po { font: 13px/15px "Liberation Serif", serif; }
.c-code { width: 128px; }
.c-oq { width: 80px; }
.c-sq { width: 47px; }
.c-unit { width: 86px; }
.c-disc { width: 72px; }
.c-total { width: 105px; }
.totals { margin-top: 15px; font-family: "Liberation Sans", sans-serif; font-size: 11px; border: 2px solid #000; }
.totals th, .totals td { height: 16px; padding: 0; text-align: right; }
.totals th { background: #000; color: #fff; }
.totals th:last-child, .totals td:last-child { padding-right: 8px; }
.k1 { width: 160px; }
.k2 { width: 144px; }
.k3 { width: 156px; }
.k5 { width: 168px; }
.k6 { width: 105px; }

/* status bar */
.status { display: flex; align-items: center; justify-content: space-between; height: 29px; padding: 0 19px 0 40%; }
.pager, .zoomer { display: flex; align-items: center; }
.pager { gap: 15px; padding-left: 7px; }
.pagebox { display: flex; align-items: center; width: 115px; height: 20px; margin: 0 -5px 0 -4px; padding: 0 4px 0 5px; background: #fff; border: 1px solid #a5a5a5; font-size: 13px; color: #000; }
.pagebox input { flex: 1; min-width: 0; }
.view { margin: 0 -5px 0 -3px; }
.zoomer { gap: 7px; }
.lay { width: 19px; height: 18px; }
.lay.on { width: 23px; }
.pct { width: 60px; margin-left: 17px; justify-content: space-between; font-size: 12px; color: #444; }
.range { width: 89px; height: 15px; appearance: none; background: linear-gradient(#333, #333) center / 100% 1px no-repeat; }
.range::-webkit-slider-thumb { appearance: none; width: 4px; height: 8px; background: #222; }

/* taskbar */
.taskbar { position: relative; display: flex; align-items: stretch; height: 40px; border-top: 1px solid #173450; background: linear-gradient(90deg, #1c5d91, #1d69a2 5%, #2f8fc9 9%, #3a9fd4 20%, #4aa5d8 24%, #3292d0 42%, #2b86c9 52%, #2373bd 65%, #1e5fad 80%, #1b5a9f 86%, #15406f 89%, #143b68); box-shadow: inset 0 1px #85b5dc; }
.streak { position: absolute; inset: 0; width: 100%; height: 100%; }
.taskbar button { position: relative; }
.orb { width: 54px; }
.tb { width: 60px; margin-right: 2px; }
.tb.plain { width: 62px; margin-right: 0; }
.tb.ie { width: 67px; padding-left: 3px; }
.run { border: 1px solid #173f60; border-radius: 3px; background: linear-gradient(135deg, rgba(255,255,255,.65), rgba(255,255,255,.25) 50%, rgba(255,255,255,.4)); box-shadow: inset 0 0 0 1px rgba(255,255,255,.5); }
.stack { padding-right: 9px; background: linear-gradient(90deg, transparent 50px, #2a5f86 50px, #2a5f86 51px, #8fc0dc 51px, #6aaed4 54px, #2a5f86 54px, #2a5f86 55px, #8fc0dc 55px), linear-gradient(135deg, rgba(255,255,255,.65), rgba(255,255,255,.25)); }
.hot { background: linear-gradient(135deg, rgba(255,255,255,.9), rgba(255,255,255,.45) 50%, rgba(255,255,255,.7)); }
.tray { position: relative; display: flex; align-items: center; gap: 8px; margin-left: auto; padding-right: 17px; }
.up { margin-right: 8px; }
.clock { position: relative; width: 62px; padding-top: 4px; color: #fff; line-height: 17px; text-align: center; white-space: nowrap; }
.desk { width: 14px; margin: 1px 0 0 11px; border: 1px solid #7fa3c4; background: linear-gradient(#5f82a5, #1b4876 60%); }
```
